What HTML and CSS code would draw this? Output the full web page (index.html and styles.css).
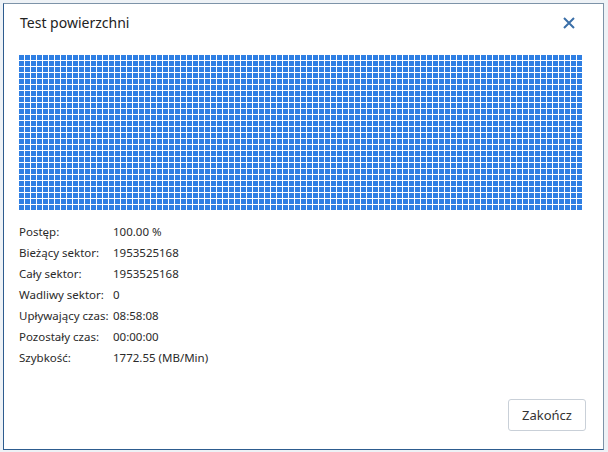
FILE: index.html
```html
<!DOCTYPE html>
<html lang="pl">
<head>
<meta charset="utf-8">
<title>Test powierzchni</title>
<link rel="stylesheet" href="styles.css">
</head>
<body>
<div class="dialog">
  <div class="header">
    <span class="title">Test powierzchni</span>
    <svg class="close" width="12" height="12" viewBox="0 0 12 12" aria-label="Zamknij">
      <path d="M1 1 L11 11 M11 1 L1 11" stroke="#3b6fa8" stroke-width="2" fill="none"/>
    </svg>
  </div>
  <div class="grid"></div>
  <div class="info">
    <div class="row"><span class="label">Postęp:</span><span class="value">100.00 %</span></div>
    <div class="row"><span class="label">Bieżący sektor:</span><span class="value">1953525168</span></div>
    <div class="row"><span class="label">Cały sektor:</span><span class="value">1953525168</span></div>
    <div class="row"><span class="label">Wadliwy sektor:</span><span class="value">0</span></div>
    <div class="row"><span class="label">Upływający czas:</span><span class="value">08:58:08</span></div>
    <div class="row"><span class="label">Pozostały czas:</span><span class="value">00:00:00</span></div>
    <div class="row"><span class="label">Szybkość:</span><span class="value">1772.55 (MB/Min)</span></div>
  </div>
  <div class="footer">
    <button class="btn">Zakończ</button>
  </div>
</div>
</body>
</html>
```
FILE: styles.css
```css
html, body {
  margin: 0;
  padding: 0;
}
body {
  width: 608px;
  height: 452px;
  background: #eef2f6;
  font-family: "Noto Sans", "Open Sans", "Liberation Sans", sans-serif;
  color: #2b2b2b;
  overflow: hidden;
  padding: 3px 0 0 3px;
  box-sizing: border-box;
}
.dialog {
  width: 601px;
  height: 447px;
  box-sizing: border-box;
  background: #ffffff;
  border: 1px solid #7d93a8;
  border-left-color: #2d5c8f;
  border-bottom-color: #2d5c8f;
  display: flex;
  flex-direction: column;
  padding: 0 19px 0 15px;
}
.header {
  height: 36px;
  display: flex;
  align-items: center;
  justify-content: space-between;
}
.title {
  font-size: 14px;
  color: #222;
  padding-left: 1px;
  margin-top: 1px;
}
.close {
  margin-right: 9px;
  margin-top: 1px;
}
.grid {
  margin-top: 15px;
  width: 563px;
  height: 155px;
  background-color: #2f7fe3;
  background-image:
    repeating-linear-gradient(to right, transparent 0, transparent 5px, #ffffff 5px, #ffffff 6px),
    repeating-linear-gradient(to bottom, transparent 0, transparent 5px, #ffffff 5px, #ffffff 6px);
}
.info {
  margin-top: 11px;
  display: flex;
  flex-direction: column;
  font-size: 11.5px;
  color: #2a2a2a;
}
.row {
  display: flex;
  height: 21px;
  align-items: center;
}
.label {
  width: 94px;
}
.footer {
  margin-top: auto;
  display: flex;
  justify-content: flex-end;
  padding-bottom: 18px;
}
.btn {
  width: 78px;
  height: 32px;
  margin-right: -2px;
  background: #ffffff;
  border: 1px solid #c9d0d8;
  border-radius: 3px;
  font-family: "Noto Sans", "Open Sans", "Liberation Sans", sans-serif;
  font-size: 13px;
  color: #333;
}
```
